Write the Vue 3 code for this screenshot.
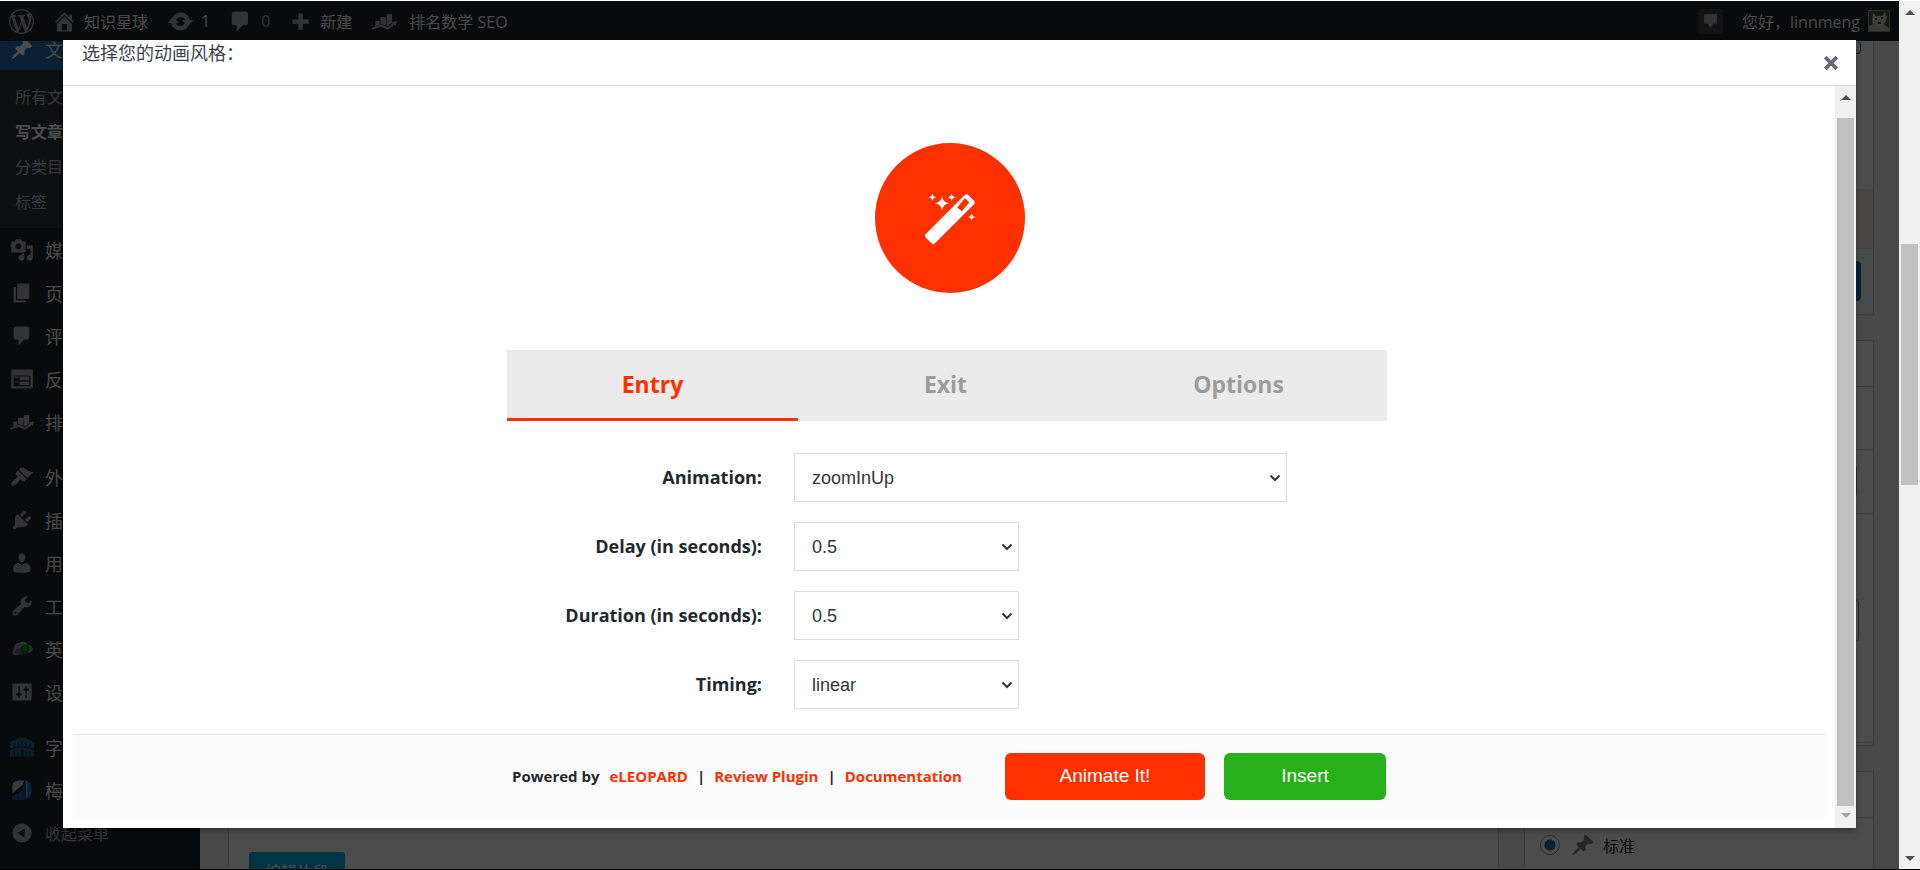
<script setup>
import { ref } from 'vue'

const D = {
  wp: 'M20 10c0-5.51-4.49-10-10-10C4.48 0 0 4.49 0 10c0 5.52 4.48 10 10 10 5.51 0 10-4.48 10-10zM7.78 15.37L4.37 6.22c.55-.02 1.17-.08 1.17-.08.5-.06.44-1.13-.06-1.11 0 0-1.45.11-2.37.11-.18 0-.37 0-.58-.01C4.12 2.69 6.87 1.11 10 1.11c2.33 0 4.45.87 6.05 2.34-.68-.11-1.65.39-1.65 1.58 0 .74.45 1.36.9 2.1.35.61.55 1.36.55 2.46 0 1.49-1.4 5-1.4 5l-3.03-8.37c.54-.02.82-.17.82-.17.5-.05.44-1.25-.06-1.22 0 0-1.44.12-2.38.12-.87 0-2.33-.12-2.33-.12-.5-.03-.56 1.2-.06 1.22l.92.08 1.26 3.41zM17.41 10c.24-.64.74-1.87.43-4.25.7 1.29 1.05 2.71 1.05 4.25 0 3.29-1.73 6.24-4.4 7.78.97-2.59 1.94-5.2 2.92-7.78zM6.1 18.09C3.12 16.65 1.11 13.53 1.11 10c0-1.3.23-2.48.72-3.59C3.25 10.3 4.67 14.2 6.1 18.09zm4.03-6.63l2.58 6.98c-.86.29-1.76.45-2.71.45-.79 0-1.57-.11-2.29-.33.81-2.38 1.62-4.74 2.42-7.1z',
  home: 'M16 8.5l1.53 1.53-1.06 1.06L10 4.6l-6.47 6.49-1.06-1.06L10 2.5l4 4v-2h2v4zm-6-2.46l6 5.99V18H4v-5.97zM12 17v-5H8v5h4z',
  update: 'M10.2 3.28c3.53 0 6.43 2.61 6.92 6h2.08l-3.5 4-3.5-4h2.32c-.45-1.97-2.21-3.45-4.32-3.45-1.45 0-2.73.71-3.54 1.78L4.95 5.66C6.23 4.2 8.11 3.28 10.2 3.28zm-.4 13.44c-3.52 0-6.43-2.61-6.92-6H.8l3.5-4c1.17 1.33 2.33 2.67 3.5 4H5.48c.45 1.97 2.21 3.45 4.32 3.45 1.45 0 2.73-.71 3.54-1.78l1.71 1.95c-1.28 1.46-3.15 2.38-5.25 2.38z',
  comment: 'M5 2h9c1.1 0 2 .9 2 2v7c0 1.1-.9 2-2 2h-2l-5 5v-5H5c-1.1 0-2-.9-2-2V4c0-1.1.9-2 2-2z',
  plus: 'M8.3 3.5h3.4v4.8h4.8v3.4h-4.8v4.8H8.3v-4.8H3.5V8.3h4.8z',
  rank: 'M2.700 9.500h3.500v3L2.700 13.900zM6.700 6.500h4.500v6.800l-3.500-1.600-1 .4zM11.600 4.100H16v6.800l-3.400 2.800-1-.4zM0 15.200l7.600-3.100 5 2.400 4.100-3.200-.9-.9 4.200-.8-1.200 4-.9-1-5.200 3.900-5.200-2.400L0 16.400z',
  pin: 'M10.44 3.02l1.82-1.82 6.36 6.35-1.83 1.82c-1.05-.68-2.48-.57-3.41.36l-.75.75c-.92.93-1.04 2.35-.35 3.41l-1.83 1.82-2.41-2.41-2.8 2.79c-.42.42-3.38 2.71-3.8 2.29s1.86-3.39 2.28-3.81l2.79-2.79L4.1 9.36l1.83-1.82c1.05.69 2.48.57 3.4-.36l.75-.75c.93-.92 1.05-2.35.36-3.41z',
  media: 'M13 11V4c0-.55-.45-1-1-1h-1.67L9 1H5L3.67 3H2c-.55 0-1 .45-1 1v7c0 .55.45 1 1 1h10c.55 0 1-.45 1-1zM7 4.5c1.38 0 2.5 1.12 2.5 2.5S8.38 9.5 7 9.5 4.5 8.38 4.5 7 5.62 4.5 7 4.5zM14 6h5v10.5c0 1.38-1.12 2.5-2.5 2.5S14 17.88 14 16.5s1.12-2.5 2.5-2.5c.17 0 .34.02.5.05V9h-3V6zm-4 8.05V13h2v3.5c0 1.38-1.12 2.5-2.5 2.5S7 17.88 7 16.5 8.12 14 9.5 14c.17 0 .34.02.5.05z',
  page: 'M6 15V2h10v13H6zm-1 1h8v2H3V5h2v11z',
  feedback: 'M2 2h16c.55 0 1 .45 1 1v14c0 .55-.45 1-1 1H2c-.55 0-1-.45-1-1V3c0-.55.45-1 1-1zm15 14V7H3v9h14zM4 8v1h3V8H4zm4 0v3h8V8H8zm-4 4v1h3v-1H4zm4 0v3h8v-3H8z',
  brush: 'M14.48 11.06L7.41 3.99l1.5-1.5c.5-.56 2.3-.47 3.51.32 1.21.8 1.43 1.28 2.91 2.1 1.18.64 2.45 1.26 4.45.85zm-.71.71L6.7 4.7 4.93 6.47c-.39.39-.39 1.02 0 1.41l1.06 1.06c.39.39.39 1.03 0 1.42-.6.6-1.43 1.11-2.21 1.69-.35.26-.7.53-1.01.84C1.43 14.23.4 16.08 1.4 17.07c.99 1 2.84-.03 4.18-1.36.31-.31.58-.66.85-1.02.57-.78 1.08-1.61 1.69-2.21.39-.39 1.02-.39 1.41 0l1.06 1.06c.39.39 1.02.39 1.41 0z',
  plug: 'M13.11 4.36L9.87 7.6 8 5.73l3.24-3.24c.35-.34 1.05-.2 1.56.32.52.51.66 1.21.31 1.55zm-8 1.77l.91-1.12 9.01 9.01-1.19.84c-.71.71-2.63 1.16-3.82 1.16H6.14L4.9 17.26c-.59.59-1.54.59-2.12 0-.59-.58-.59-1.53 0-2.12l1.24-1.24v-3.88c0-1.13.4-3.19 1.09-3.89zm7.26 3.97l3.24-3.24c.34-.35 1.04-.21 1.55.31.52.51.66 1.21.31 1.55l-3.24 3.25z',
  user: 'M10 9.25c-2.27 0-2.73-3.44-2.73-3.44C7 4.02 7.82 2 9.97 2c2.16 0 2.98 2.02 2.71 3.81 0 0-.41 3.44-2.68 3.44zm0 2.57L12.72 10c2.39 0 4.52 2.33 4.52 4.53v2.49s-3.65 1.13-7.24 1.13c-3.65 0-7.24-1.13-7.24-1.13v-2.49c0-2.25 1.94-4.48 4.47-4.48z',
  tool: 'M16.68 9.77c-1.34 1.34-3.3 1.67-4.95.99l-5.41 6.52c-.99.99-2.59.99-3.58 0s-.99-2.59 0-3.57l6.52-5.42c-.68-1.65-.35-3.61.99-4.95 1.28-1.28 3.12-1.62 4.72-1.06l-2.89 2.89 2.82 2.82 2.86-2.87c.53 1.58.18 3.39-1.08 4.65zM3.81 16.21c.4.39 1.04.39 1.43 0 .4-.4.4-1.04 0-1.43-.39-.4-1.03-.4-1.43 0-.39.39-.39 1.03 0 1.43z',
  settings: 'M18 16V4c0-.55-.45-1-1-1H3c-.55 0-1 .45-1 1v12c0 .55.45 1 1 1h14c.55 0 1-.45 1-1zM8 11h1c.55 0 1 .45 1 1s-.45 1-1 1H8v1.5c0 .28-.22.5-.5.5s-.5-.22-.5-.5V13H6c-.55 0-1-.45-1-1s.45-1 1-1h1V5.5c0-.28.22-.5.5-.5s.5.22.5.5V11zm5-2h-1c-.55 0-1-.45-1-1s.45-1 1-1h1V5.5c0-.28.22-.5.5-.5s.5.22.5.5V7h1c.55 0 1 .45 1 1s-.45 1-1 1h-1v5.5c0 .28-.22.5-.5.5s-.5-.22-.5-.5V9z',
  collapse: 'M10 2a8 8 0 1 0 0 16a8 8 0 1 0 0-16zM12.2 6v8L6.4 10z',
  bubble: 'M4 3h12v9h-3.2L10 16l-2.8-4H4z'
}

const barLinks = [
  { id: 'home', d: D.home, text: '知识星球' },
  { id: 'update', d: D.update, text: '1' },
  { id: 'comments', d: D.comment, text: '0', dim: true },
  { id: 'new', d: D.plus, text: '新建' },
  { id: 'rank', d: D.rank, text: '排名数学 SEO' }
]

const submenu = [
  { text: '所有文章' },
  { text: '写文章', current: true },
  { text: '分类目录' },
  { text: '标签' }
]

const groups = [
  [
    { text: '媒体', d: D.media },
    { text: '页面', d: D.page },
    { text: '评论', d: D.comment },
    { text: '反馈', d: D.feedback },
    { text: '排名数学', d: D.rank }
  ],
  [
    { text: '外观', d: D.brush },
    { text: '插件', d: D.plug },
    { text: '用户', d: D.user },
    { text: '工具', d: D.tool },
    { text: '英', art: 'cloud' },
    { text: '设置', d: D.settings }
  ],
  [
    { text: '字', art: 'temple' },
    { text: '梅', art: 'drop' }
  ]
]

const tabs = ['Entry', 'Exit', 'Options']
const active = ref('Entry')

const fields = [
  { id: 'animation', label: 'Animation:', value: 'zoomInUp', wide: true },
  { id: 'delay', label: 'Delay (in seconds):', value: '0.5' },
  { id: 'duration', label: 'Duration (in seconds):', value: '0.5' },
  { id: 'timing', label: 'Timing:', value: 'linear' }
]
</script>

<template>
  <div class="screen">
    <div class="viewport">
      <header class="adminbar">
        <a href="#" class="bar-link logo" aria-label="WordPress">
          <svg viewBox="0 0 20 20"><path :d="D.wp" /></svg>
        </a>
        <a v-for="l in barLinks" :key="l.id" href="#" class="bar-link" :class="[l.id, { dim: l.dim }]">
          <svg viewBox="0 0 20 20"><path fill-rule="evenodd" :d="l.d" /></svg>
          <span>{{ l.text }}</span>
        </a>
        <a href="#" class="notice" aria-label="通知">
          <svg viewBox="0 0 20 20"><path :d="D.bubble" /></svg>
        </a>
        <a href="#" class="account">
          <span>您好，linnmeng</span>
          <svg class="avatar" viewBox="0 0 22 22">
            <rect width="22" height="22" fill="#8a9080" />
            <rect x="1" y="1" width="20" height="20" fill="#4c5144" />
            <path d="M5 3l3 3h6l3-4 2 6-3 7-5 4-5-3-2-5z" fill="#d2cfc0" />
            <path d="M1 16l6-3 3 4 6-2 5 3v3H1z" fill="#b9c4b4" />
            <path d="M7 8h2v2H7zM13 7h2v2h-2zM10 12h3v2h-3z" fill="#33302b" />
          </svg>
        </a>
      </header>

      <div class="workspace">
        <nav class="sidebar">
          <a href="#" class="item current">
            <svg viewBox="0 0 20 20"><path :d="D.pin" /></svg><span>文章</span>
          </a>
          <ul class="submenu">
            <li v-for="s in submenu" :key="s.text"><a href="#" :class="{ on: s.current }">{{ s.text }}</a></li>
          </ul>
          <div v-for="(g, i) in groups" :key="i" class="group">
            <a v-for="m in g" :key="m.text" href="#" class="item">
              <svg v-if="m.d" viewBox="0 0 20 20"><path fill-rule="evenodd" :d="m.d" /></svg>
              <svg v-else-if="m.art === 'cloud'" viewBox="0 0 20 20">
                <path d="M4 15.500a3 3 0 0 1-.5-5.500 4 4 0 0 1 4-5 5 5 0 0 1 7.500 1.500 3.500 3.500 0 0 1 3.500 5q-2 2.500-7 2.500z" fill="#8d9aa0" />
                <path d="M3 13q5 3 11 1l-3-5-6 1z" fill="#5c6c88" />
                <circle cx="12.500" cy="10" r="3.800" fill="#0e7020" />
                <circle cx="12.500" cy="10" r="2" fill="#15a018" />
              </svg>
              <svg v-else-if="m.art === 'temple'" viewBox="0 0 20 20">
                <path d="M0 6l5-2.500 5-1.500 5 1.500L20 6v12h-3v-5h-1v5h-2v-6h-1v6h-2v-6H9v6H7v-6H6v6H4v-5H3v5H0z" fill="#1b7196" />
                <path d="M0 12q10-4 20 0M3.500 7v4M7 6v4M10 5v4M13 6v4M16.500 7v4" fill="none" stroke="#1d2327" />
              </svg>
              <svg v-else viewBox="0 0 20 20">
                <path d="M2 13V7q0-5 6-5h4q-1 4-4 6z" fill="#bfc3c8" />
                <path d="M2 18v-3q9-2 10-10l1-3q5 1 5 8t-6 8z" fill="#2377c4" />
                <path d="M2 18v-3q4 0 6-3v6zM9 11q4-3 3-8l2 2v13H9z" fill="#174a93" />
                <path d="M14 3v13" stroke="#9cc4ea" />
              </svg>
              <span>{{ m.text }}</span>
            </a>
          </div>
          <button type="button" class="item collapse">
            <svg viewBox="0 0 20 20"><path fill-rule="evenodd" :d="D.collapse" /></svg><span>收起菜单</span>
          </button>
        </nav>

        <main class="editor">
          <button type="button" class="snippet">编辑片段</button>
        </main>

        <aside class="side">
          <section class="panel publish">
            <div class="stub preview"></div>
            <div class="warn"></div>
            <div class="actions"><div class="stub primary"></div></div>
          </section>
          <section class="panel seo">
            <div class="band title"></div>
            <div class="band second"></div>
            <div class="band third"><div class="stub"></div></div>
            <div class="rest"><div class="stub"></div></div>
          </section>
          <section class="panel format">
            <div class="band title"></div>
            <label class="choice">
              <input type="radio" name="format" checked />
              <svg viewBox="0 0 20 20"><path :d="D.pin" /></svg>
              <span>标准</span>
            </label>
          </section>
        </aside>
      </div>

      <div class="backdrop"></div>

      <section class="modal" role="dialog" aria-labelledby="dlg-title">
        <header class="modal-head">
          <h1 id="dlg-title">选择您的动画风格：</h1>
          <button type="button" class="close" aria-label="关闭">
            <svg viewBox="0 0 14 14"><path d="M2.500 2.500l9 9M11.500 2.500l-9 9" /></svg>
          </button>
        </header>
        <div class="modal-body">
          <div class="pane">
            <div class="hero">
              <svg viewBox="0 0 150 150">
                <circle cx="75" cy="75" r="75" fill="#ff3000" />
                <g fill="#fff">
                  <path fill-rule="evenodd" d="M50.500 91.300L90 51.800q1.500-1.500 3 0l6.200 6.200q1.500 1.500 0 3L59.700 100.500q-1.500 1.500-3 0l-6.200-6.200q-1.500-1.500 0-3zM82.300 64.500l4.500 3.800 7.500-8.800-4.300-4.500z" />
                  <path d="M67 53q.8 6.600 7.200 7.300-6.400.7-7.200 7.500-.8-6.800-7.200-7.500 6.400-.7 7.200-7.300z" />
                  <path d="M57.300 50.500q.5 3.300 3.800 3.800-3.300.5-3.800 3.800-.5-3.300-3.800-3.800 3.300-.5 3.800-3.800z" />
                  <path d="M76.700 50.500q.5 3.300 3.800 3.800-3.300.5-3.800 3.800-.5-3.300-3.800-3.800 3.300-.5 3.800-3.800z" />
                  <path d="M96.700 70.200q.5 3.300 3.800 3.800-3.300.5-3.800 3.800-.5-3.300-3.800-3.800 3.300-.5 3.800-3.800z" />
                </g>
              </svg>
            </div>
            <div class="column">
              <div class="tabs" role="tablist">
                <button v-for="t in tabs" :key="t" type="button" role="tab" :class="{ active: active === t }" @click="active = t">{{ t }}</button>
              </div>
              <form class="form" @submit.prevent>
                <div v-for="f in fields" :key="f.id" class="row">
                  <label :for="f.id">{{ f.label }}</label>
                  <div class="picker" :class="{ wide: f.wide }">
                    <select :id="f.id"><option>{{ f.value }}</option></select>
                    <svg viewBox="0 0 12 8"><path d="M1.500 1.500L6 6l4.500-4.500" /></svg>
                  </div>
                </div>
              </form>
            </div>
            <footer class="foot">
              <div class="foot-row">
                <p class="credits">
                  <span>Powered by</span><a href="#">eLEOPARD</a><i>|</i><a href="#">Review Plugin</a><i>|</i><a href="#">Documentation</a>
                </p>
                <div class="buttons">
                  <button type="button" class="btn animate">Animate It!</button>
                  <button type="button" class="btn insert">Insert</button>
                </div>
              </div>
            </footer>
          </div>
          <div class="scroll inner" aria-hidden="true">
            <svg viewBox="0 0 10 5"><path d="M0 5L5 0l5 5z" /></svg>
            <div class="track"><div class="thumb"></div></div>
            <svg class="off" viewBox="0 0 10 5"><path d="M0 0l5 5 5-5z" /></svg>
          </div>
        </div>
      </section>
    </div>

    <div class="scroll outer" aria-hidden="true">
      <svg viewBox="0 0 10 5"><path d="M0 5L5 0l5 5z" /></svg>
      <div class="track"><div class="thumb"></div></div>
      <svg viewBox="0 0 10 5"><path d="M0 0l5 5 5-5z" /></svg>
    </div>
  </div>
</template>

<style>
body { background: #fff; }
</style>

<style scoped>
* { box-sizing: border-box; }
a { text-decoration: none; color: inherit; }
button { font: inherit; border: 0; padding: 0; background: none; cursor: pointer; }
svg { display: block; flex: none; }

.screen {
  display: flex;
  height: 100vh;
  overflow: hidden;
  border-top: 1px solid #fff;
  border-bottom: 1px solid #000;
  font-family: "Open Sans", "Noto Sans CJK SC", sans-serif;
  font-size: 16px;
}
.viewport {
  position: relative;
  flex: 1;
  min-width: 0;
  display: flex;
  flex-direction: column;
  background: #f0f0f1;
}

/* admin bar */
.adminbar {
  flex: none;
  display: flex;
  align-items: center;
  height: 40px;
  padding: 0 9px;
  background: #1d2327;
  color: #f0f0f1;
}
.adminbar svg { fill: #a7aaad; }
.bar-link { display: flex; align-items: center; gap: 7px; margin-right: 18px; }
.bar-link svg { width: 25px; height: 25px; }
.bar-link.home, .bar-link.new { margin-right: 20px; }
.bar-link.update { gap: 8px; }
.bar-link.update svg { stroke: #a7aaad; stroke-width: 1; }
.bar-link.dim { color: #a7aaad; }
.bar-link.comments { gap: 8px; }
.bar-link.rank { gap: 12px; }
.notice {
  display: flex;
  align-items: center;
  justify-content: center;
  width: 25px;
  height: 25px;
  margin-left: auto;
  background: #3c3c3c;
  border-radius: 2px;
}
.notice svg { width: 21px; height: 21px; }
.account { display: flex; align-items: center; gap: 8px; margin-left: 19px; }
.avatar { width: 22px; height: 22px; }

/* page behind the dialog */
.workspace { flex: 1; min-height: 0; display: flex; overflow: hidden; }
.sidebar { flex: none; width: 200px; background: #1d2327; color: #f0f0f1; overflow: hidden; }
.item {
  display: flex;
  align-items: center;
  gap: 11px;
  width: 100%;
  height: 43px;
  padding-left: 10px;
  font-size: 18px;
  white-space: nowrap;
}
.item svg { width: 24px; height: 24px; fill: #a7aaad; }
.item.current { height: 29px; padding-bottom: 13px; background: #2271b1; }
.item.current svg { fill: #fff; }
.submenu {
  list-style: none;
  margin: 0;
  padding: 10px 0 8px 15px;
  background: #2c3338;
  color: #b4b9be;
}
.submenu a { display: block; line-height: 35px; white-space: nowrap; }
.submenu .on { color: #fff; font-weight: 700; }
.group + .group { margin-top: 12px; }
.item.collapse { font-size: 16px; color: #a7aaad; }
.editor {
  flex: 1;
  display: flex;
  align-items: flex-end;
  margin: 0 25px 0 28px;
  background: #fff;
  border: solid #c3c4c7;
  border-width: 0 1px;
}
.snippet {
  height: 38px;
  margin: 0 0 -21px 20px;
  padding: 0 16px;
  border-radius: 3px;
  background: #0cade8;
  color: #fff;
}
.side { flex: none; width: 350px; margin-right: 25px; display: flex; flex-direction: column; gap: 25px; }
.panel { flex: none; background: #fff; border: 1px solid #c3c4c7; }
.stub { width: 80px; margin-left: auto; border: 1px solid #8c8f94; border-radius: 4px; }
.publish { border-top: 0; display: flex; flex-direction: column; height: 274px; }
.preview { height: 13px; margin-right: 12px; border-color: #2271b1; border-top: 0; }
.warn { height: 60px; margin-top: 135px; background: #fbe5e5; border-bottom: 1px solid #dcdcde; }
.actions { flex: 1; padding-top: 12px; padding-right: 12px; background: #f0f6f4; }
.primary { height: 40px; background: #2271b1; border-color: #2271b1; }
.band { border-bottom: 1px solid #c3c4c7; }
.title { height: 46px; }
.second { height: 63px; }
.third { height: 64px; padding: 14px 16px 0 0; }
.third .stub { height: 34px; }
.rest { height: 229px; margin-bottom: 2px; padding: 85px 14px 0 0; border-bottom: 1px solid #dcdcde; }
.rest .stub { height: 43px; }
.format { height: 160px; }
.choice { display: flex; align-items: center; padding: 15px 0 0 15px; color: #1d2327; }
.choice input {
  appearance: none;
  width: 20px;
  height: 20px;
  margin: 0 11px 0 0;
  border: 1px solid #8c8f94;
  border-radius: 50%;
  background: radial-gradient(circle, #2271b1 5px, #fff 6px);
}
.choice svg { width: 24px; height: 24px; margin-right: 8px; fill: #787c82; }
.backdrop { position: absolute; inset: 0; background: rgba(0, 0, 0, 0.7); }

/* dialog */
.modal {
  position: absolute;
  inset: 39px 43px 41px 63px;
  display: flex;
  flex-direction: column;
  background: #fff;
  box-shadow: 0 3px 6px rgba(0, 0, 0, 0.3);
}
.modal-head {
  flex: none;
  display: flex;
  justify-content: space-between;
  height: 46px;
  padding: 0 16px 0 19px;
  border-bottom: 1px solid #ddd;
}
h1 { margin: 0; font-size: 18px; line-height: 26px; font-weight: 400; color: #3c434a; }
.close { display: flex; align-items: center; width: 18px; height: 45px; }
.close svg { width: 18px; height: 18px; fill: none; stroke: #666c72; stroke-width: 3; }
.modal-body { flex: 1; min-height: 0; display: flex; }
.pane { flex: 1; min-width: 0; padding: 57px 10px 0; overflow: hidden; }
.hero { padding-left: 2px; }
.hero svg { width: 150px; height: 150px; margin: 0 auto; }
.column { max-width: 884px; margin: 57px auto 0; padding-right: 4px; }
.tabs { display: flex; gap: 2px; height: 71px; background: #ebebeb; }
.tabs button {
  width: 291px;
  border-bottom: 3px solid transparent;
  font-size: 23px;
  font-weight: 700;
  color: #9c9c9c;
}
.tabs .active { color: #ff3000; border-bottom-color: #ff3000; }
.form { display: grid; gap: 20px; padding-top: 32px; }
.row { display: grid; grid-template-columns: 255px 1fr; gap: 32px; align-items: center; }
.row label { text-align: right; font-size: 18px; line-height: 24px; padding-bottom: 2px; font-weight: 700; color: #23282d; }
.picker { position: relative; width: 225px; }
.picker.wide { width: 493px; }
.picker svg {
  position: absolute;
  top: 21px;
  right: 6px;
  width: 12px;
  height: 8px;
  fill: none;
  stroke: #32373c;
  stroke-width: 2;
  pointer-events: none;
}
select {
  appearance: none;
  display: block;
  width: 100%;
  height: 49px;
  padding: 0 24px 0 17px;
  border: 1px solid #ddd;
  border-radius: 0;
  background: #fff;
  color: #32373c;
  font-family: "Liberation Sans", Arial, sans-serif;
  font-size: 18px;
}
.foot { height: 83px; margin-top: 25px; border-top: 1px solid #e5e5e5; background: #fcfcfc; }
.foot-row {
  display: flex;
  align-items: center;
  justify-content: space-between;
  max-width: 874px;
  height: 100%;
  margin: 0 auto;
}
.credits { display: flex; margin: 0; font-size: 15px; font-weight: 700; color: #23282d; white-space: nowrap; }
.credits i { font-style: normal; margin: 0 9px; }
.credits span { margin-right: 10px; }
.credits a { color: #ff3000; }
.buttons { display: flex; gap: 19px; }
.btn {
  height: 47px;
  border-radius: 6px;
  color: #fff;
  font-family: "Liberation Sans", Arial, sans-serif;
  font-size: 19px;
}
.animate { width: 200px; background: #ff3000; }
.insert { width: 162px; background: #26b11b; }

/* scrollbars */
.scroll {
  flex: none;
  display: flex;
  flex-direction: column;
  align-items: center;
  width: 21px;
  background: #f1f1f1;
}
.scroll svg { width: 10px; height: 5px; fill: #505050; }
.scroll .off { fill: #a3a3a3; }
.track { flex: 1; width: 17px; display: flex; flex-direction: column; }
.thumb { background: #c1c1c1; }
.inner { padding: 9px 0 10px; }
.inner .track { padding: 18px 0 7px; }
.inner .thumb { flex: 1; }
.outer { padding: 9px 0 8px; }
.outer .track { padding-top: 229px; }
.outer .thumb { height: 241px; }
</style>
